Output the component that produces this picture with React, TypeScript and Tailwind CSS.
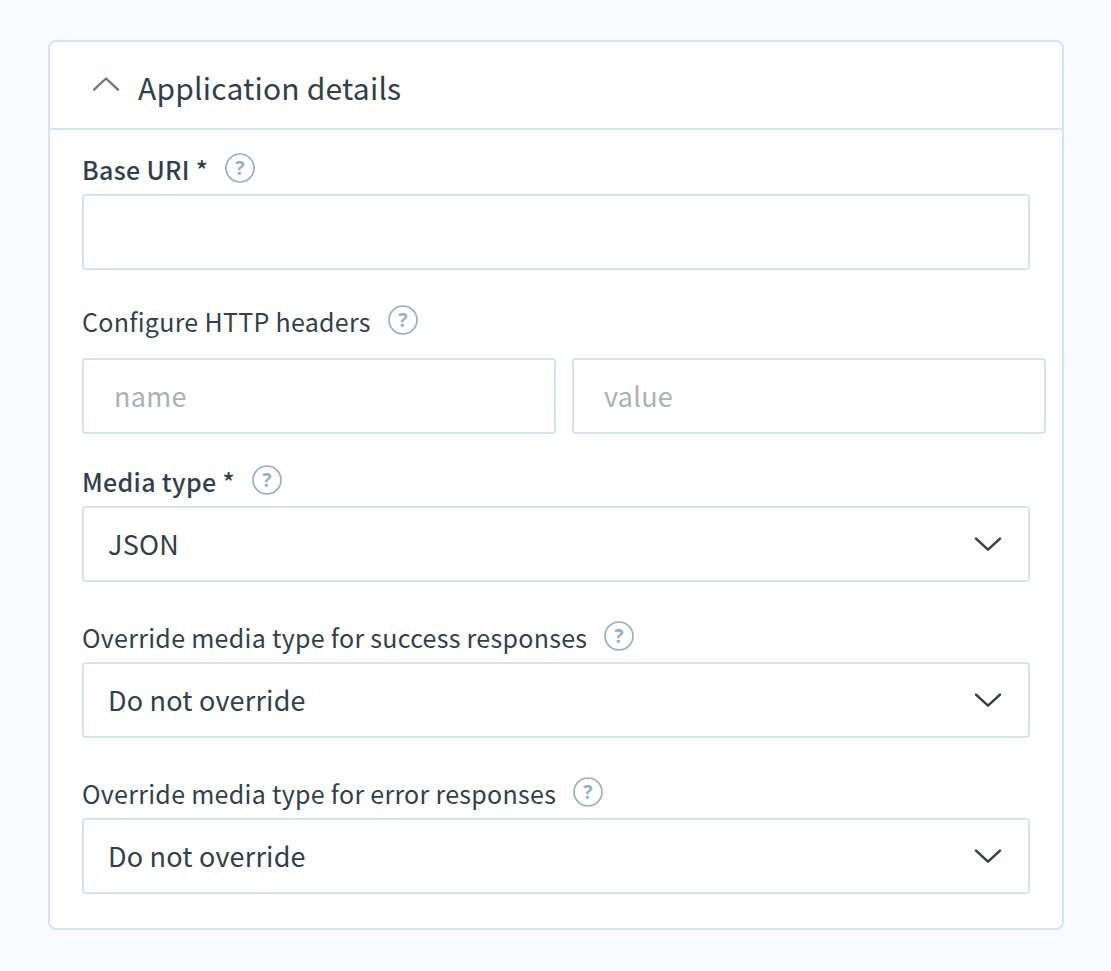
import React, { useState } from 'react'

const inputClass =
  'h-[76px] w-full rounded-[4px] border-2 border-[#d6e4ed] bg-white px-[30px] pb-[2px] text-[27px] tracking-[0.28px] text-[#323f4b] placeholder:text-[#adb0b3] outline-none'

const HelpIcon = () => (
  <svg width="30" height="30" viewBox="0 0 30 30" fill="none" className="shrink-0 text-[#98afc3]">
    <circle cx="15" cy="15" r="14" stroke="currentColor" strokeWidth="1.7" />
    <text x="15" y="21.8" textAnchor="middle" fill="currentColor" className="font-['Noto_Sans',sans-serif] text-[19.5px] font-bold">
      ?
    </text>
  </svg>
)

const Label = ({ text, required }: { text: string; required?: boolean }) => (
  <div className="flex h-[30px] items-center gap-[16.8px]">
    <span
      className={`pt-[2px] text-[25px] leading-[30px] whitespace-nowrap text-[#323f4b] ${
        required ? 'font-medium tracking-[0.32px]' : 'font-normal tracking-[0.29px]'
      }`}
    >
      {required ? `${text} *` : text}
    </span>
    <HelpIcon />
  </div>
)

const Select = ({ value }: { value: string }) => (
  <button
    type="button"
    className="flex h-[76px] w-full items-center justify-between rounded-[4px] border-2 border-[#d6e4ed] bg-white pr-[25px] pl-[24px] text-left"
  >
    <span className="text-[27px] leading-[40px] tracking-[0.2px] text-[#323f4b]">{value}</span>
    <svg width="30" height="18" viewBox="0 0 30 18" fill="none" className="text-[#323f4b]">
      <path d="M3 3.6L15 14.6L27 3.6" stroke="currentColor" strokeWidth="2.5" strokeLinecap="round" strokeLinejoin="round" />
    </svg>
  </button>
)

export default function App() {
  const [baseUri, setBaseUri] = useState('')
  const [header, setHeader] = useState({ name: '', value: '' })

  return (
    <main className="h-[971px] bg-[#f8faff] px-12 pt-10 font-['Noto_Sans_CJK_SC',sans-serif]">
      <section className="h-[890px] w-[1016px] rounded-lg border-2 border-[#d6e4ed] bg-white">
        {/* Header */}
        <header className="flex h-[88px] items-center border-b-2 border-[#d6e4ed] pl-[41px]">
          <svg width="30" height="18" viewBox="0 0 30 18" fill="none" className="text-[#647787]">
            <path d="M3 13.7L15 2.5L27 13.7" stroke="currentColor" strokeWidth="2.3" strokeLinecap="round" strokeLinejoin="round" />
          </svg>
          <h2 className="pt-[3px] pl-[17px] text-[30px] leading-[40px] tracking-[0.2px] text-[#323f4b]">
            Application details
          </h2>
        </header>

        {/* Fields */}
        <div className="px-8 pt-[23px]">
          <Label text="Base URI" required />
          <div className="mt-[11px]">
            <input className={inputClass} value={baseUri} onChange={e => setBaseUri(e.target.value)} />
          </div>

          <div className="mt-[35px]">
            <Label text="Configure HTTP headers" />
            <div className="mt-[23px] -mr-4 grid grid-cols-2 gap-4">
              <input
                className={inputClass}
                placeholder="name"
                value={header.name}
                onChange={e => setHeader({ ...header, name: e.target.value })}
              />
              <input
                className={inputClass}
                placeholder="value"
                value={header.value}
                onChange={e => setHeader({ ...header, value: e.target.value })}
              />
            </div>
          </div>

          <div className="mt-[31px] flex flex-col gap-[11px]">
            <Label text="Media type" required />
            <Select value="JSON" />
          </div>

          <div className="mt-[39px] flex flex-col gap-[11px]">
            <Label text="Override media type for success responses" />
            <Select value="Do not override" />
          </div>

          <div className="mt-[39px] flex flex-col gap-[11px]">
            <Label text="Override media type for error responses" />
            <Select value="Do not override" />
          </div>
        </div>
      </section>
    </main>
  )
}
